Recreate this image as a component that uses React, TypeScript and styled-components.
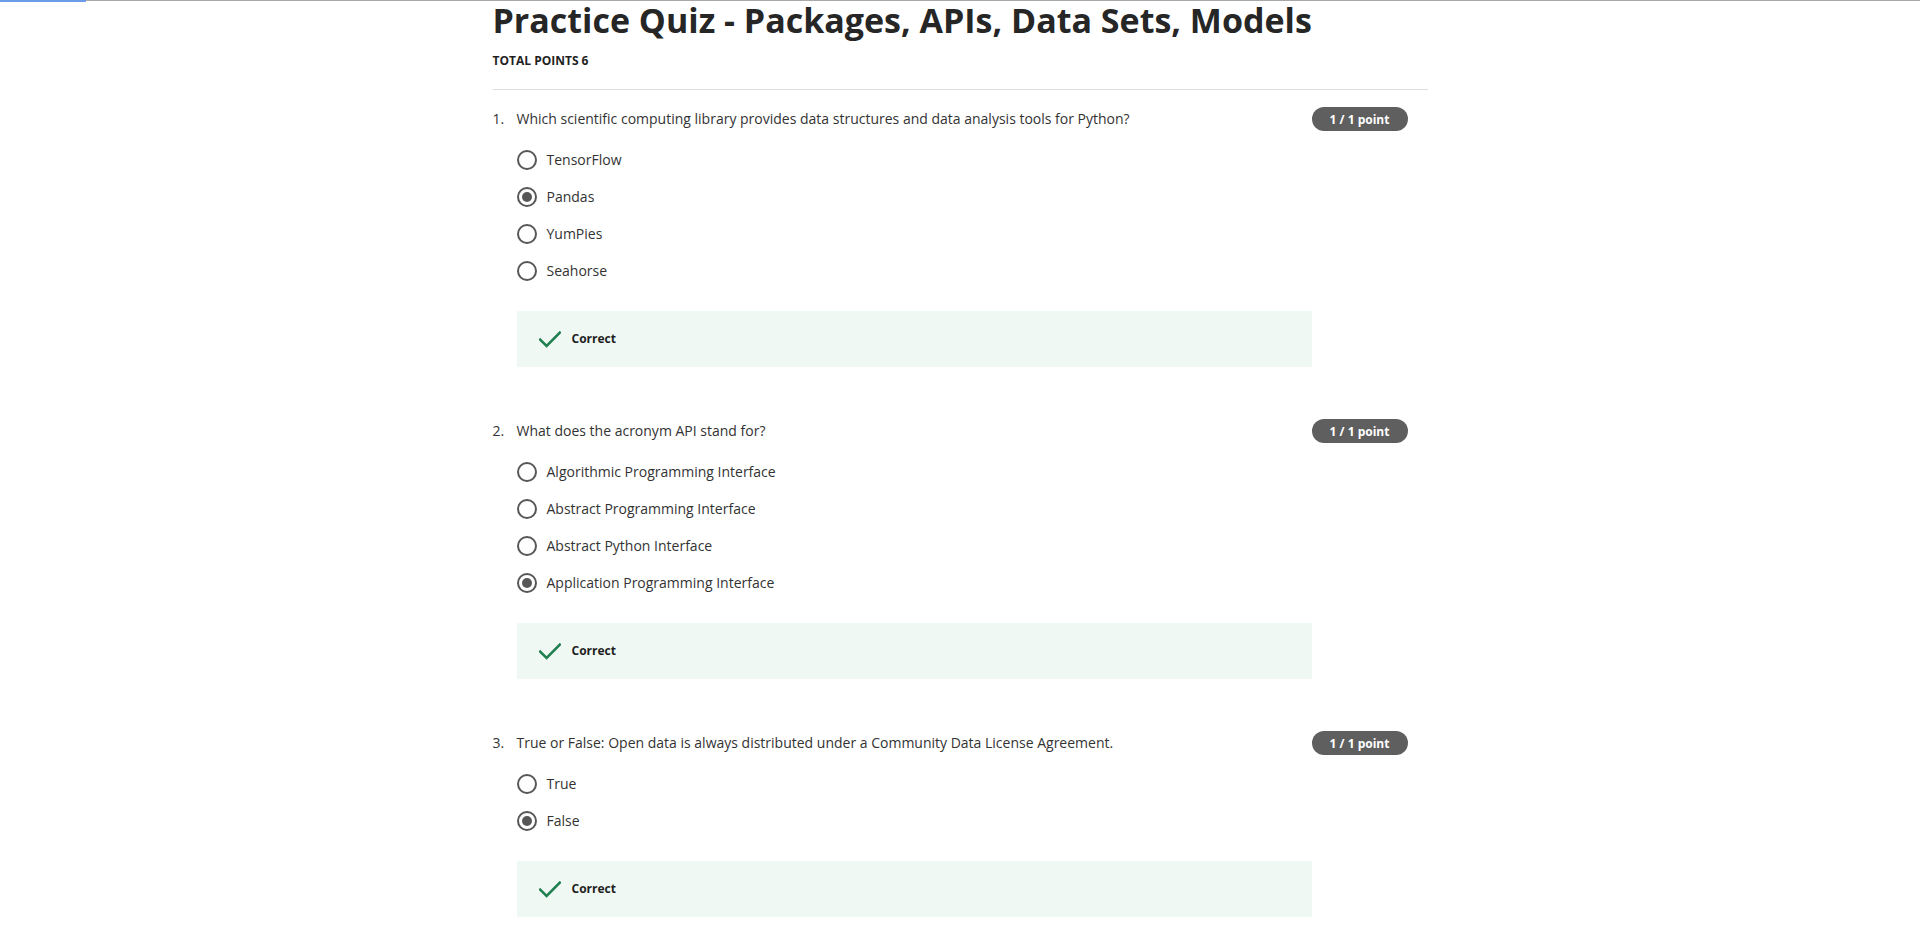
import React from "react";
import styled, { createGlobalStyle } from "styled-components";

const GlobalStyle = createGlobalStyle`
  html, body { margin: 0; padding: 0; background: #ffffff; }
  body {
    font-family: "Open Sans", "Noto Sans", "Liberation Sans", sans-serif;
    color: #1f1f1f;
    -webkit-font-smoothing: antialiased;
  }
  * { box-sizing: border-box; }
`;

const ProgressTrack = styled.div`
  position: fixed;
  top: 0;
  left: 0;
  right: 0;
  height: 1px;
  background: #a8a8a8;
  z-index: 10;
`;

const ProgressFill = styled.div`
  position: absolute;
  top: 0;
  left: 0;
  height: 2px;
  background: #6c9bea;
`;

const Page = styled.main`
  max-width: 935px;
  margin: 0 auto;
  padding-bottom: 40px;
`;

const Title = styled.h1`
  margin: 0;
  font-size: 34px;
  line-height: 40px;
  font-weight: 700;
  color: #262626;
`;

const TotalPoints = styled.div`
  margin-top: 13px;
  font-size: 12px;
  line-height: 16px;
  font-weight: 700;
  color: #1f1f1f;
`;

const Divider = styled.hr`
  margin: 20px 0 0;
  border: 0;
  height: 1px;
  background: #dcdcdc;
`;

const QuestionList = styled.ol`
  list-style: none;
  margin: 17px 0 0;
  padding: 0;
  display: flex;
  flex-direction: column;
  gap: 52px;
`;

const Question = styled.li`
  display: flex;
  align-items: flex-start;
  padding-right: 20px;
`;

const Number = styled.span`
  width: 24px;
  flex: none;
  font-size: 14px;
  line-height: 24px;
  color: #333333;
`;

const Body = styled.div`
  flex: 1;
  min-width: 0;
`;

const Prompt = styled.div`
  font-size: 14px;
  line-height: 24px;
  color: #333333;
`;

const Options = styled.div`
  margin-top: 10px;
  display: flex;
  flex-direction: column;
`;

const Option = styled.label`
  height: 37px;
  display: flex;
  align-items: center;
  gap: 10px;
  font-size: 14px;
  color: #333333;
`;

const Radio = styled.span<{ $checked: boolean }>`
  width: 20px;
  height: 20px;
  flex: none;
  border-radius: 50%;
  border: 2px solid #575757;
  display: flex;
  align-items: center;
  justify-content: center;
  &::after {
    content: "";
    width: 10px;
    height: 10px;
    border-radius: 50%;
    background: ${(p) => (p.$checked ? "#575757" : "transparent")};
  }
`;

const Feedback = styled.div`
  margin-top: 22px;
  height: 56px;
  background: #eff8f3;
  display: flex;
  align-items: center;
  padding-left: 22px;
  gap: 11px;
`;

const FeedbackText = styled.span`
  font-size: 12px;
  line-height: 16px;
  font-weight: 700;
  color: #1f1f1f;
  margin-top: -1px;
`;

const Badge = styled.span`
  flex: none;
  width: 96px;
  height: 24px;
  border-radius: 12px;
  background: #5f5f5f;
  color: #ffffff;
  font-size: 12px;
  font-weight: 700;
  display: flex;
  align-items: center;
  justify-content: center;
`;

const Check = () => (
  <svg width="22" height="17" viewBox="0 0 22 17" aria-hidden>
    <path
      d="M1.2 8.6 L7.6 15 L20.8 1.6"
      fill="none"
      stroke="#1f7f4f"
      strokeWidth="2.5"
      strokeLinecap="square"
    />
  </svg>
);

const questions = [
  {
    text: "Which scientific computing library provides data structures and data analysis tools for Python?",
    options: ["TensorFlow", "Pandas", "YumPies", "Seahorse"],
    answer: 1,
  },
  {
    text: "What does the acronym API stand for?",
    options: [
      "Algorithmic Programming Interface",
      "Abstract Programming Interface",
      "Abstract Python Interface",
      "Application Programming Interface",
    ],
    answer: 3,
  },
  {
    text: "True or False: Open data is always distributed under a Community Data License Agreement.",
    options: ["True", "False"],
    answer: 1,
  },
];

export default function App() {
  return (
    <>
      <GlobalStyle />
      <ProgressTrack>
        <ProgressFill style={{ width: 86 }} />
      </ProgressTrack>
      <Page>
        <Title>Practice Quiz - Packages, APIs, Data Sets, Models</Title>
        <TotalPoints>TOTAL POINTS 6</TotalPoints>
        <Divider />
        <QuestionList>
          {questions.map((q, i) => (
            <Question key={i}>
              <Number>{i + 1}.</Number>
              <Body>
                <Prompt>{q.text}</Prompt>
                <Options>
                  {q.options.map((o, j) => (
                    <Option key={j}>
                      <Radio $checked={j === q.answer} />
                      {o}
                    </Option>
                  ))}
                </Options>
                <Feedback>
                  <Check />
                  <FeedbackText>Correct</FeedbackText>
                </Feedback>
              </Body>
              <Badge>1 / 1 point</Badge>
            </Question>
          ))}
        </QuestionList>
      </Page>
    </>
  );
}
